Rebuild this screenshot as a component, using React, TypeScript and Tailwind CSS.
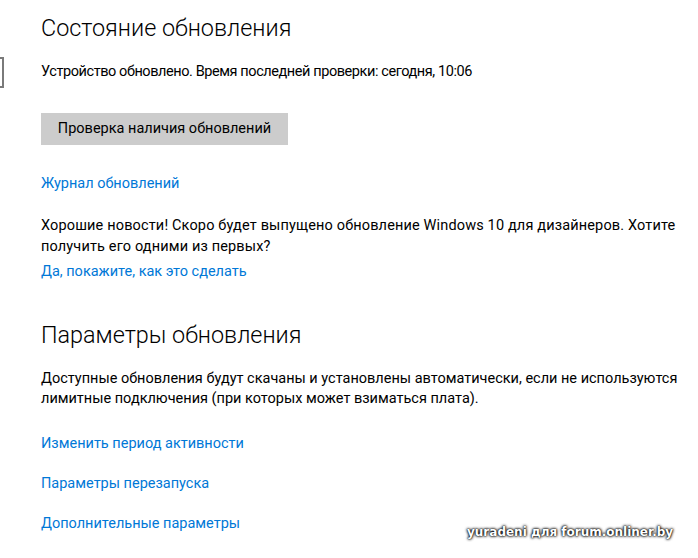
export default function App() {
  const link = 'text-[#0078d7] leading-[20px] whitespace-nowrap';
  return (
    <div className="relative flex w-[698px] h-[558px] overflow-hidden bg-white text-[14.5px] text-black font-['Roboto',sans-serif]">
      {/* clipped edge of the navigation pane */}
      <div className="w-[4px] shrink-0 overflow-hidden">
        <div className="mt-[57px] ml-[-20px] w-[24px] h-[31px] border-2 border-[#7a7a7a]" />
        <div className="mt-[350px] ml-[-6px] text-[15px] leading-[20px] text-[#222]">1</div>
      </div>

      {/* main settings column */}
      <div className="flex flex-col items-start pl-[37px] pt-[12px]">
        <h1 className="text-[23.4px] leading-[32px] font-light whitespace-nowrap">Состояние обновления</h1>
        <p className="mt-[18px] leading-[20px] whitespace-nowrap tracking-[-0.42px]">
          Устройство обновлено. Время последней проверки: сегодня, 10:06
        </p>
        <button className="mt-[31px] w-[247px] h-[32px] shrink-0 bg-[#cccccc] text-[14.5px] leading-[20px] text-black">
          Проверка наличия обновлений
        </button>
        <a className={`${link} mt-[29px]`}>Журнал обновлений</a>
        <p className="mt-[21px] leading-[21px] whitespace-nowrap">
          <span className="tracking-[0.15px]">
            Хорошие новости! Скоро будет выпущено обновление Windows 10 для дизайнеров. Хотите
          </span>
          <br />
          <span className="tracking-[0.15px]">получить его одними из первых?</span>
        </p>
        <a className={`${link} mt-[5px]`}>Да, покажите, как это сделать</a>

        <h2 className="mt-[37px] text-[23.4px] leading-[32px] font-light whitespace-nowrap">Параметры обновления</h2>
        <p className="mt-[18px] leading-[20px] whitespace-nowrap">
          Доступные обновления будут скачаны и установлены автоматически, если не используются
          <br />
          лимитные подключения (при которых может взиматься плата).
        </p>
        <a className={`${link} mt-[25px]`}>Изменить период активности</a>
        <a className={`${link} mt-[20px]`}>Параметры перезапуска</a>
        <a className={`${link} mt-[20px]`}>Дополнительные параметры</a>
      </div>

      {/* forum watermark */}
      <div className="absolute left-[467px] top-[523px] text-[12px] font-bold text-white font-['DejaVu_Sans',sans-serif] [text-shadow:0_0_3px_#000,0_0_3px_#000,0_0_1px_#000]">
        yuradeni для forum.onliner.by
      </div>
    </div>
  );
}
